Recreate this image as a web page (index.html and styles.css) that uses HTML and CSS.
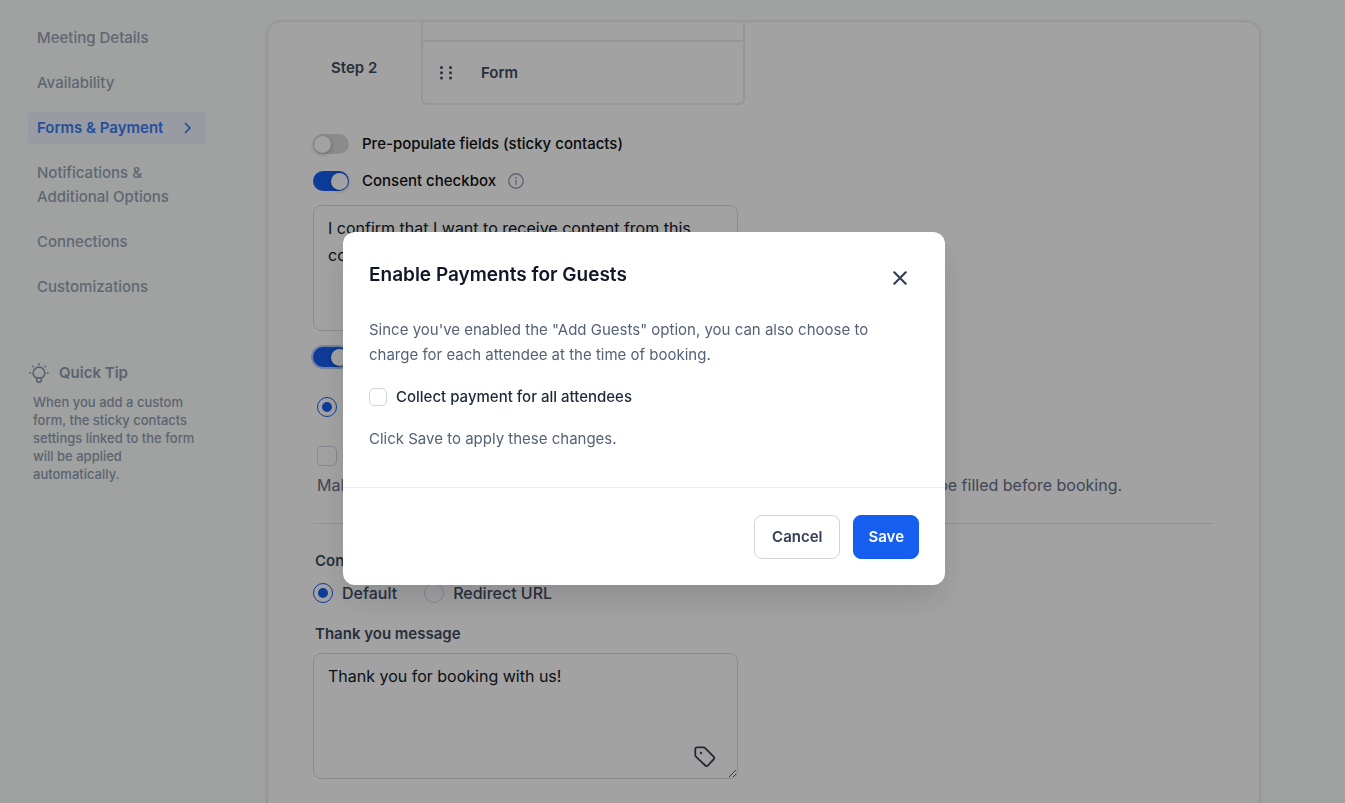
FILE: index.html
```html
<!DOCTYPE html>
<html lang="en">
<head>
<meta charset="utf-8">
<meta name="viewport" content="width=device-width, initial-scale=1">
<title>Forms &amp; Payment</title>
<link rel="stylesheet" href="styles.css">
</head>
<body>
<div class="page">
  <aside class="sidebar">
    <nav class="nav">
      <a class="nav-item" href="#">Meeting Details</a>
      <a class="nav-item" href="#">Availability</a>
      <a class="nav-item active" href="#">Forms &amp; Payment
        <svg width="8" height="12" viewBox="0 0 8 12" fill="none" stroke="currentColor" stroke-width="1.700" stroke-linecap="round" stroke-linejoin="round"><path d="M1.500 1.500 6 6l-4.500 4.500"/></svg>
      </a>
      <a class="nav-item" href="#">Notifications &amp; Additional Options</a>
      <a class="nav-item" href="#">Connections</a>
      <a class="nav-item" href="#">Customizations</a>
    </nav>
    <section class="tip">
      <h2 class="tip-title">
        <svg width="20" height="22" viewBox="0 0 20 22" fill="none" stroke="currentColor" stroke-width="1.700" stroke-linecap="round"><path d="M7.800 15.900C5.500 15 4.200 13.200 4.200 10.900a5.800 5.800 0 0 1 11.600 0c0 2.300-1.300 4.100-3.600 5"/><path d="M7.700 15.900h4.600v2a2.300 2.300 0 0 1-4.600 0z" stroke-linejoin="round"/><path d="M10 1.900v.5M1 10.800h.5M18.500 10.800h.5M3.600 4.300l.3.300M16.400 4.300l-.3.300"/></svg>
        Quick Tip
      </h2>
      <p class="tip-text">When you add a custom form, the sticky contacts settings linked to the form will be applied automatically.</p>
    </section>
  </aside>

  <main class="card">
    <div class="steps">
      <div class="step-name">Step 2</div>
      <div class="step-box">
        <div class="step-top"></div>
        <div class="step-row">
          <svg width="14" height="15" viewBox="0 0 14 15" fill="currentColor"><circle cx="2.500" cy="2.500" r="1.500"/><circle cx="11.500" cy="2.500" r="1.500"/><circle cx="2.500" cy="7.800" r="1.500"/><circle cx="11.500" cy="7.800" r="1.500"/><circle cx="2.500" cy="13.100" r="1.500"/><circle cx="11.500" cy="13.100" r="1.500"/></svg>
          <span>Form</span>
        </div>
      </div>
    </div>

    <label class="toggle-row"><input class="toggle" type="checkbox">Pre-populate fields (sticky contacts)</label>
    <div class="toggle-line">
      <label class="toggle-row"><input class="toggle" type="checkbox" checked>Consent checkbox</label>
      <svg class="info" width="16" height="16" viewBox="0 0 16 16" fill="none" stroke="currentColor" stroke-width="1.400" stroke-linecap="round"><circle cx="8" cy="8" r="7.200"/><path d="M8 7.500v3.800"/><path d="M8 4.700v.2" stroke-width="1.700"/></svg>
    </div>
    <div class="field"><textarea class="area" aria-label="Consent text">I confirm that I want to receive content from this company using any contact information I provide.</textarea></div>

    <div class="toggle-row payments"><input class="toggle focused" type="checkbox" aria-label="Payments" checked></div>
    <div class="option"><input class="radio" type="radio" name="mode" aria-label="Payment mode" checked></div>
    <div class="option"><input class="check" type="checkbox" aria-label="Require form fields"></div>
    <p class="note">Make payment collection the final step, so that all of the required form fields must be filled before booking.</p>

    <hr class="rule">
    <h3 class="label">Confirmation page</h3>
    <div class="radios">
      <label class="radio-label"><input class="radio" type="radio" name="confirm" checked>Default</label>
      <label class="radio-label"><input class="radio" type="radio" name="confirm">Redirect URL</label>
    </div>
    <label class="label thanks" for="thanks">Thank you message</label>
    <div class="field">
      <textarea class="area" id="thanks">Thank you for booking with us!</textarea>
      <button class="tag" type="button" aria-label="Insert tag">
        <svg width="22" height="22" viewBox="0 0 22 22" fill="none" stroke="currentColor" stroke-width="1.800" stroke-linejoin="round"><path d="M3 1.300h6.700c.5 0 .9.200 1.200.5l8.700 8.800c.8.800.8 1.900 0 2.700l-5.700 6.200c-.7.700-1.900.7-2.600 0L1.900 10.600a1.800 1.800 0 0 1-.6-1.200V3c0-.9.800-1.700 1.700-1.700z"/><circle cx="7" cy="7" r=".9" fill="currentColor" stroke-width=".8"/></svg>
      </button>
    </div>
  </main>
</div>

<div class="overlay">
  <div class="modal" role="dialog" aria-modal="true" aria-labelledby="title">
    <div class="modal-body">
      <header class="modal-head">
        <h1 class="modal-title" id="title">Enable Payments for Guests</h1>
        <button class="close" type="button" aria-label="Close">
          <svg width="14" height="14" viewBox="0 0 14 14" fill="none" stroke="currentColor" stroke-width="2.200" stroke-linecap="round"><path d="M1.300 1.300l11.400 11.400M12.700 1.300 1.300 12.700"/></svg>
        </button>
      </header>
      <p class="modal-text">Since you've enabled the "Add Guests" option, you can also choose to charge for each attendee at the time of booking.</p>
      <label class="collect"><input class="check small" type="checkbox">Collect payment for all attendees</label>
      <p class="modal-text">Click Save to apply these changes.</p>
    </div>
    <footer class="modal-foot">
      <button class="btn" type="button">Cancel</button>
      <button class="btn primary" type="button">Save</button>
    </footer>
  </div>
</div>
</body>
</html>
```

FILE: styles.css
```css
* { box-sizing: border-box; }

body {
  margin: 0;
  font: 400 15px/24px Inter, "Liberation Sans", sans-serif;
  color: #3f4b5f;
  background: #fbfffd;
}

h1, h2, h3, p { margin: 0; }
input, button, textarea { margin: 0; font: inherit; }
svg { display: block; flex: none; }

.page {
  display: flex;
  height: 100vh;
  padding: 21px 85px 0 28px;
  overflow: hidden;
}

/* Sidebar */
.sidebar { flex: none; width: 239px; padding-top: 1px; }

.nav {
  display: flex;
  flex-direction: column;
  gap: 13px;
  width: 178px;
}

.nav-item {
  display: flex;
  align-items: center;
  justify-content: space-between;
  padding: 4px 14px 4px 9px;
  border-radius: 4px;
  color: #98a2b3;
  font-weight: 500;
  text-decoration: none;
}

.nav-item.active {
  background: #eff4ff;
  color: #3b7df5;
  font-weight: 600;
}

.tip { margin-top: 58px; color: #939db0; }

.tip-title {
  display: flex;
  align-items: center;
  gap: 10px;
  padding-left: 1px;
  font-size: 15px;
  font-weight: 600;
}

.tip-text {
  width: 174px;
  margin-top: 8px;
  padding-left: 5px;
  font-size: 13px;
  font-weight: 500;
  line-height: 18px;
}

/* Settings card */
.card {
  flex: 1;
  min-width: 0;
  height: 900px;
  padding: 0 45px;
  border: 1px solid #e9e9e9;
  border-radius: 14px;
  background: #fff;
  box-shadow: 0 1px 4px rgba(0, 0, 0, .12);
}

.steps { display: flex; }

.step-name {
  width: 108px;
  padding: 34px 0 0 18px;
  font-weight: 600;
}

.step-box {
  width: 324px;
  border: 2px solid #eaecf0;
  border-top: 0;
  border-radius: 0 0 6px 6px;
}

.step-top { height: 20px; border-bottom: 2px solid #eaecf0; }

.step-row {
  display: flex;
  align-items: center;
  gap: 28px;
  height: 61px;
  padding-left: 16px;
  font-weight: 600;
}

.toggle-row {
  display: flex;
  align-items: center;
  gap: 13px;
  color: #101010;
  font-weight: 500;
}

.steps + .toggle-row { margin-top: 27px; }

.toggle-line {
  display: flex;
  align-items: center;
  gap: 12px;
  margin-top: 13px;
}

.info { color: #98a2b3; }

.toggle {
  appearance: none;
  display: flex;
  align-items: center;
  width: 36px;
  height: 20px;
  padding: 0 1px;
  border-radius: 10px;
  background: #dbdbdb;
}

.toggle::before {
  content: "";
  width: 17px;
  height: 17px;
  border-radius: 50%;
  background: #fff;
  box-shadow: 0 1px 4px rgba(0, 0, 0, .3);
}

.toggle:checked { justify-content: flex-end; background: #155eef; }
.toggle.focused { box-shadow: 0 0 0 2px rgba(21, 94, 239, .3); }

.field { position: relative; width: 425px; margin-top: 12px; }

.area {
  display: block;
  width: 100%;
  height: 126px;
  padding: 9px 14px;
  border: 1px solid #d8dadd;
  border-radius: 8px;
  background: #fff;
  color: #101828;
  font-size: 16px;
  line-height: 27px;
  outline: 0;
}

.payments { height: 24px; margin-top: 14px; }

.option {
  display: flex;
  align-items: center;
  height: 24px;
  margin-top: 26px;
  padding-left: 4px;
}

.option + .option { margin-top: 25px; }

.radio, .check {
  appearance: none;
  flex: none;
  display: grid;
  place-items: center;
  width: 20px;
  height: 20px;
  border: 1px solid #d0d5dd;
  border-radius: 50%;
  background: #fff;
}

.radio:checked { border-color: #155eef; }

.radio:checked::before {
  content: "";
  width: 10px;
  height: 10px;
  border-radius: 50%;
  background: #155eef;
}

.check { border-radius: 5px; }
.check.small { width: 18px; height: 18px; }

.note {
  margin-top: 5px;
  padding-left: 4px;
  color: #667085;
  font-size: 16px;
  white-space: nowrap;
}

.rule { margin: 26px 0 25px; border: 0; border-top: 1px solid #e4e7ec; }

.label {
  display: block;
  padding-left: 2px;
  font-size: 15px;
  font-weight: 600;
}

.radios { display: flex; gap: 27px; margin-top: 8px; font-size: 16px; font-weight: 500; }
.radio-label { display: flex; align-items: center; gap: 9px; }
.thanks { margin-top: 17px; }
.thanks + .field { margin-top: 7px; }

.tag {
  position: absolute;
  right: 22px;
  bottom: 11px;
  padding: 0;
  border: 0;
  background: none;
  color: #344054;
}

/* Dialog */
.overlay {
  position: fixed;
  inset: 0;
  display: flex;
  align-items: center;
  justify-content: center;
  padding: 14px 57px 0 0;
  background: rgba(0, 0, 0, .365);
}

.modal {
  width: 602px;
  border-radius: 12px;
  background: #fff;
  box-shadow: 0 16px 32px -4px rgba(16, 24, 40, .16);
}

.modal-body {
  display: flex;
  flex-direction: column;
  gap: 17px;
  padding: 29px 26px 36px;
}

.modal-head {
  display: flex;
  align-items: center;
  justify-content: space-between;
  margin-bottom: 11px;
}

.modal-title {
  font-size: 19px;
  line-height: 28px;
  font-weight: 600;
  color: #101828;
}

.close {
  padding: 10px 12px 4px;
  border: 0;
  background: none;
  color: #344054;
}

.modal-text { line-height: 25px; color: #556277; }

.collect {
  display: flex;
  align-items: center;
  gap: 9px;
  line-height: 25px;
  font-weight: 500;
  color: #1d2939;
}

.modal-foot {
  display: flex;
  justify-content: flex-end;
  gap: 13px;
  padding: 27px 26px 26px;
  border-top: 1px solid #eaecf0;
}

.btn {
  height: 44px;
  padding: 0 17px;
  border: 1px solid #d0d5dd;
  border-radius: 8px;
  background: #fff;
  color: #344054;
  font-weight: 600;
}

.btn.primary {
  padding: 0 14px;
  border-color: #155eef;
  background: #155eef;
  color: #fff;
}
```
